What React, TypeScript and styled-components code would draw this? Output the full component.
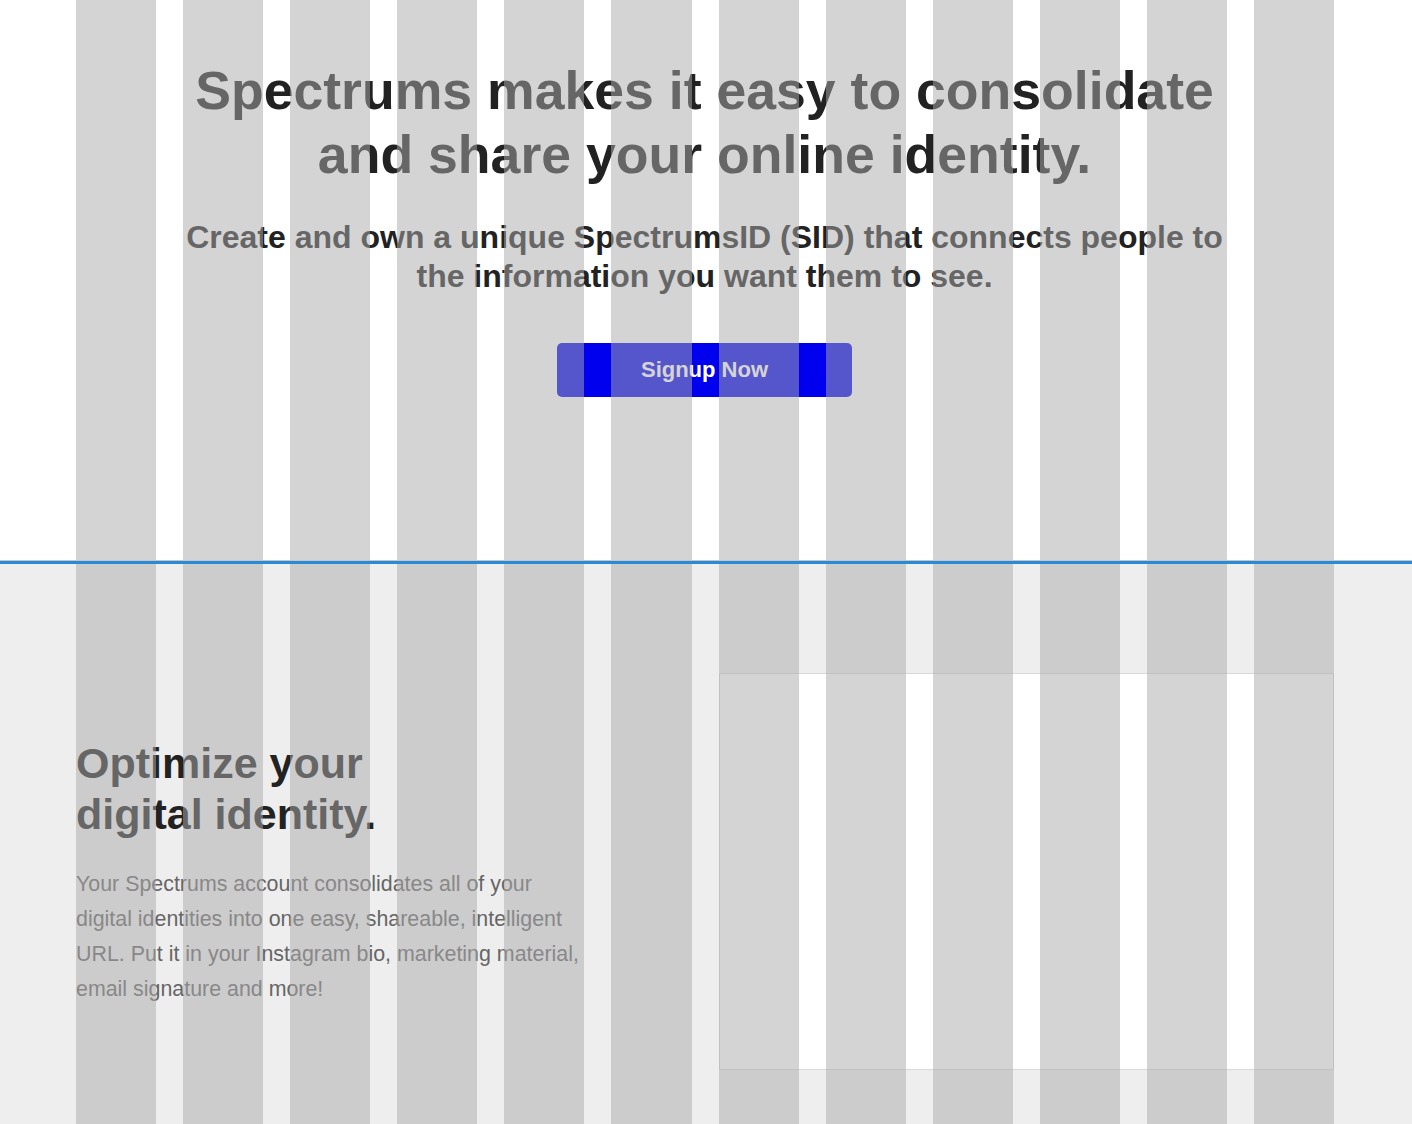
import React from 'react';
import styled, { createGlobalStyle } from 'styled-components';

const GlobalStyle = createGlobalStyle`
  * {
    box-sizing: border-box;
  }

  html,
  body {
    margin: 0;
    padding: 0;
    background: #ffffff;
    font-family: 'Liberation Sans', Arial, Helvetica, sans-serif;
    color: #222222;
  }
`;

const Hero = () => {
  return (
    <HeroStyled>
      <h1>
        Spectrums makes it easy to consolidate
        <br />
        and share your online identity.
      </h1>
      <p className="lead">
        Create and own a unique SpectrumsID (SID) that connects people to
        <br />
        the information you want them to see.
      </p>
      <SignupButton type="button">Signup Now</SignupButton>
    </HeroStyled>
  );
};

const Feature = () => {
  return (
    <FeatureStyled>
      <div className="copy">
        <h2>Optimize your digital identity.</h2>
        <p>
          Your Spectrums account consolidates all of your digital identities into one easy,
          shareable, intelligent URL. Put it in your Instagram bio, marketing material, email
          signature and more!
        </p>
      </div>
      <div className="preview"></div>
    </FeatureStyled>
  );
};

// 12 column layout guide drawn over the page
const GridOverlay = () => {
  const columns = Array.from({ length: 12 });

  return (
    <OverlayStyled aria-hidden="true">
      {columns.map((_, index) => (
        <span key={index} className="col" />
      ))}
    </OverlayStyled>
  );
};

export default function App() {
  return (
    <>
      <GlobalStyle />
      <Page>
        <Hero />
        <Divider />
        <Feature />
      </Page>
      <GridOverlay />
    </>
  );
}

const Page = styled.main`
  min-height: 100vh;
  display: flex;
  flex-direction: column;
  background: #eeeeee;
`;

const HeroStyled = styled.section`
  background: #ffffff;
  padding: 58px 3px 163px 0;
  display: flex;
  flex-direction: column;
  align-items: center;
  text-align: center;

  h1 {
    margin: 0;
    font-size: 53.6px;
    line-height: 64px;
    font-weight: 700;
    color: #222222;
  }

  .lead {
    margin: 32px 0 0;
    font-size: 32px;
    line-height: 39px;
    font-weight: 700;
    color: #222222;
  }
`;

const SignupButton = styled.button`
  margin-top: 47px;
  width: 295px;
  height: 54px;
  border: none;
  border-radius: 5px;
  background: #0000ee;
  color: #ffffff;
  font-family: inherit;
  font-size: 22px;
  font-weight: 700;
  cursor: pointer;
`;

const Divider = styled.div`
  position: relative;
  z-index: 20;
  height: 4px;
  border-top: 1px solid #c6c6c6;
  background: #2a8ad8;
`;

const FeatureStyled = styled.section`
  flex: 1;
  background: #eeeeee;
  padding: 109px 78px 110px 76px;
  display: grid;
  grid-template-columns: 1fr 1fr;
  column-gap: 27px;
  align-items: center;

  .copy {
    margin-top: 2px;

    h2 {
      margin: 0;
      max-width: 400px;
      font-size: 43px;
      line-height: 50.4px;
      font-weight: 700;
      color: #222222;
    }

    p {
      margin: 28px 0 0;
      max-width: 508px;
      font-size: 21.4px;
      line-height: 35px;
      color: #666666;
    }
  }

  .preview {
    height: 397px;
    background: #ffffff;
    border: 1px solid #d9d9d9;
  }
`;

const OverlayStyled = styled.div`
  position: fixed;
  top: 0;
  bottom: 0;
  left: 76px;
  width: 1258px;
  z-index: 10;
  pointer-events: none;
  display: grid;
  grid-template-columns: repeat(12, 1fr);
  column-gap: 27px;

  .col {
    background: rgba(170, 170, 170, 0.5);
  }
`;
